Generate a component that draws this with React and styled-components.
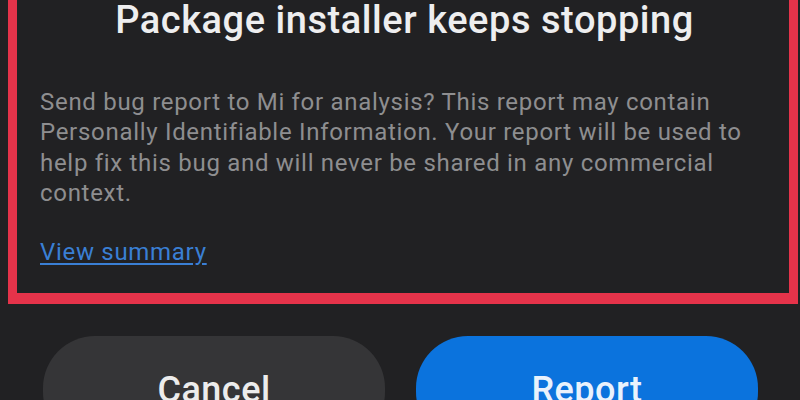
import React from 'react'
import styled, { createGlobalStyle } from 'styled-components'

const Global = createGlobalStyle`
  html, body {
    margin: 0;
    padding: 0;
    background: #212123;
    overflow: hidden;
  }
  body {
    font-family: Roboto, "Noto Sans", "Liberation Sans", sans-serif;
  }
`

const Screen = styled.div`
  width: 800px;
  height: 400px;
  overflow: hidden;
  background: #212123;
`

const Highlight = styled.section`
  margin: 0 2px 0 8px;
  border: 9px solid #e5334a;
  border-top: none;
  border-bottom-width: 11px;
  padding: 0 20px 26px 23px;
`

const Title = styled.h1`
  margin: 0;
  font-size: 38px;
  line-height: 40px;
  font-weight: 500;
  letter-spacing: 0.55px;
  color: #eeeeef;
  text-align: center;
  white-space: nowrap;
`

const Message = styled.p`
  margin: 47px 0 0;
  font-size: 24px;
  line-height: 30.3px;
  letter-spacing: 0.7px;
  color: #8e8e90;
  white-space: nowrap;
`

const SummaryLink = styled.a`
  display: inline-block;
  margin-top: 29px;
  font-size: 24px;
  line-height: 30px;
  letter-spacing: 0.7px;
  color: #3a7fd4;
  text-decoration: underline;
  text-underline-offset: 3px;
  cursor: pointer;
`

const Actions = styled.div`
  display: flex;
  gap: 31px;
  padding: 32px 42px 0 43px;
`

const ActionButton = styled.button`
  flex: 1;
  height: 108px;
  border: none;
  border-radius: 52px;
  background: ${p => (p.$primary ? '#0b73dd' : '#353537')};
  color: ${p => (p.$primary ? '#e9f2fc' : '#ececec')};
  font-family: Roboto, "Noto Sans", sans-serif;
  font-size: 36px;
  font-weight: 500;
  letter-spacing: 0.5px;
  padding: 0;
  cursor: pointer;
`

export default function App() {
  return (
    <Screen>
      <Global />
      <Highlight>
        <Title>Package installer keeps stopping</Title>
        <Message>
          Send bug report to Mi for analysis? This report may contain<br />
          Personally Identifiable Information. Your report will be used to<br />
          help fix this bug and will never be shared in any commercial<br />
          context.
        </Message>
        <SummaryLink>View summary</SummaryLink>
      </Highlight>
      <Actions>
        <ActionButton>Cancel</ActionButton>
        <ActionButton $primary>Report</ActionButton>
      </Actions>
    </Screen>
  )
}
